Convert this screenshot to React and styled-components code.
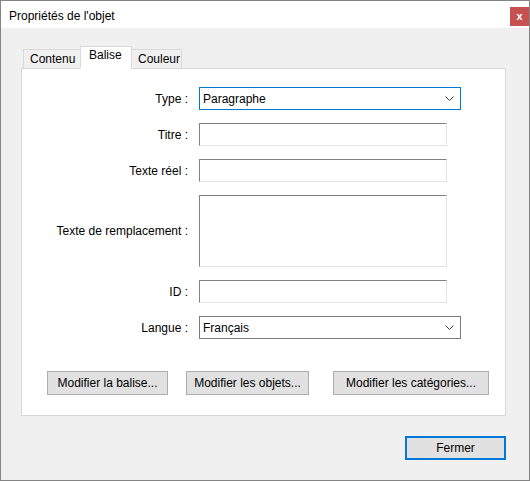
import React from "react";
import styled, { createGlobalStyle } from "styled-components";

const Global = createGlobalStyle`
  html, body { margin: 0; padding: 0; background: #f0f0f0; }
  * { box-sizing: border-box; }
  body { font-family: "Segoe UI", "Liberation Sans", Arial, sans-serif; font-size: 12px; color: #000; }
`;

const Window = styled.div`
  width: 530px;
  height: 481px;
  border: 1px solid #848484;
  display: flex;
  flex-direction: column;
  background: #f0f0f0;
`;

const TitleBar = styled.div`
  height: 27px;
  background: #fff;
  display: flex;
  justify-content: space-between;
  align-items: flex-start;
  padding-left: 8px;
`;

const Title = styled.div`
  margin-top: 7px;
  font-size: 12px;
  line-height: 16px;
`;

const CloseButton = styled.div`
  margin-top: 6px;
  width: 19px;
  height: 19px;
  background: #c75050;
  color: #fff;
  font-size: 11px;
  font-weight: bold;
  line-height: 18px;
  text-align: center;
`;

const Body = styled.div`
  flex: 1;
  display: flex;
  flex-direction: column;
  padding: 19px 23px 0 20px;
`;

const TabStrip = styled.div`
  display: flex;
  align-items: flex-end;
  height: 22px;
  padding-left: 2px;
  margin-bottom: -1px;
  position: relative;
  z-index: 1;
`;

const Tab = styled.div`
  width: ${(p) => p.$w}px;
  height: ${(p) => (p.$active ? 23 : 20)}px;
  border: 1px solid #d9d9d9;
  border-bottom: ${(p) => (p.$active ? "1px solid #fff" : "1px solid #d9d9d9")};
  margin-left: ${(p) => (p.$active ? -1 : 0)}px;
  margin-right: ${(p) => (p.$active ? -1 : 0)}px;
  background: ${(p) => (p.$active ? "#fff" : "#f0f0f0")};
  border-left-width: ${(p) => (p.$noLeft ? 0 : 1)}px;
  padding: ${(p) => (p.$active ? "1px 0 0 8px" : "2px 0 0 6px")};
  font-size: 12px;
  line-height: 15px;
`;

const Panel = styled.div`
  height: 348px;
  background: #fff;
  border: 1px solid #d9d9d9;
  padding: 18px 15px 0 0;
  display: flex;
  flex-direction: column;
`;

const Form = styled.div`
  display: grid;
  grid-template-columns: 166px 1fr;
  column-gap: 11px;
  row-gap: 13px;
  align-items: center;
`;

const Label = styled.div`
  text-align: right;
  font-size: 12px;
  white-space: nowrap;
`;

const Select = styled.div`
  width: 262px;
  height: 23px;
  border: 1px solid ${(p) => (p.$focused ? "#0078d7" : "#7a7a7a")};
  background: #fff;
  display: flex;
  align-items: center;
  justify-content: space-between;
  padding: 0 6px 0 3px;
  font-size: 12px;
`;

const Field = styled.div`
  width: 248px;
  height: ${(p) => p.$h || 23}px;
  background: #fff;
  border-top: 1px solid #828282;
  border-left: 1px solid #828282;
  border-right: 1px solid #e3e3e3;
  border-bottom: 1px solid #e3e3e3;
`;

const ButtonRow = styled.div`
  display: flex;
  gap: 18px;
  margin-top: 32px;
  padding-left: 25px;
`;

const Button = styled.div`
  width: ${(p) => p.$w}px;
  height: 24px;
  margin-left: ${(p) => p.$ml || 0}px;
  background: #e1e1e1;
  border: ${(p) => (p.$primary ? "2px solid #0078d7" : "1px solid #adadad")};
  display: flex;
  align-items: center;
  justify-content: center;
  font-size: 12px;
`;

const Footer = styled.div`
  display: flex;
  justify-content: flex-end;
  margin-top: 20px;
`;

const Chevron = () => (
  <svg width="9" height="5" viewBox="0 0 9 5">
    <path d="M0.5 0.5 L4.5 4.5 L8.5 0.5" fill="none" stroke="#404040" strokeWidth="1" />
  </svg>
);

export default function App() {
  return (
    <>
      <Global />
      <Window>
        <TitleBar>
          <Title>Propriétés de l'objet</Title>
          <CloseButton>x</CloseButton>
        </TitleBar>
        <Body>
          <TabStrip>
            <Tab $w={58}>Contenu</Tab>
            <Tab $w={52} $active>Balise</Tab>
            <Tab $w={51}>Couleur</Tab>
          </TabStrip>
          <Panel>
            <Form>
              <Label>Type :</Label>
              <Select $focused>
                <span>Paragraphe</span>
                <Chevron />
              </Select>
              <Label>Titre :</Label>
              <Field />
              <Label>Texte réel :</Label>
              <Field />
              <Label>Texte de remplacement :</Label>
              <Field $h={72} />
              <Label>ID :</Label>
              <Field />
              <Label>Langue :</Label>
              <Select>
                <span>Français</span>
                <Chevron />
              </Select>
            </Form>
            <ButtonRow>
              <Button $w={121}>Modifier la balise...</Button>
              <Button $w={123}>Modifier les objets...</Button>
              <Button $w={156} $ml={6}>Modifier les catégories...</Button>
            </ButtonRow>
          </Panel>
          <Footer>
            <Button $w={101} $primary>Fermer</Button>
          </Footer>
        </Body>
      </Window>
    </>
  );
}
